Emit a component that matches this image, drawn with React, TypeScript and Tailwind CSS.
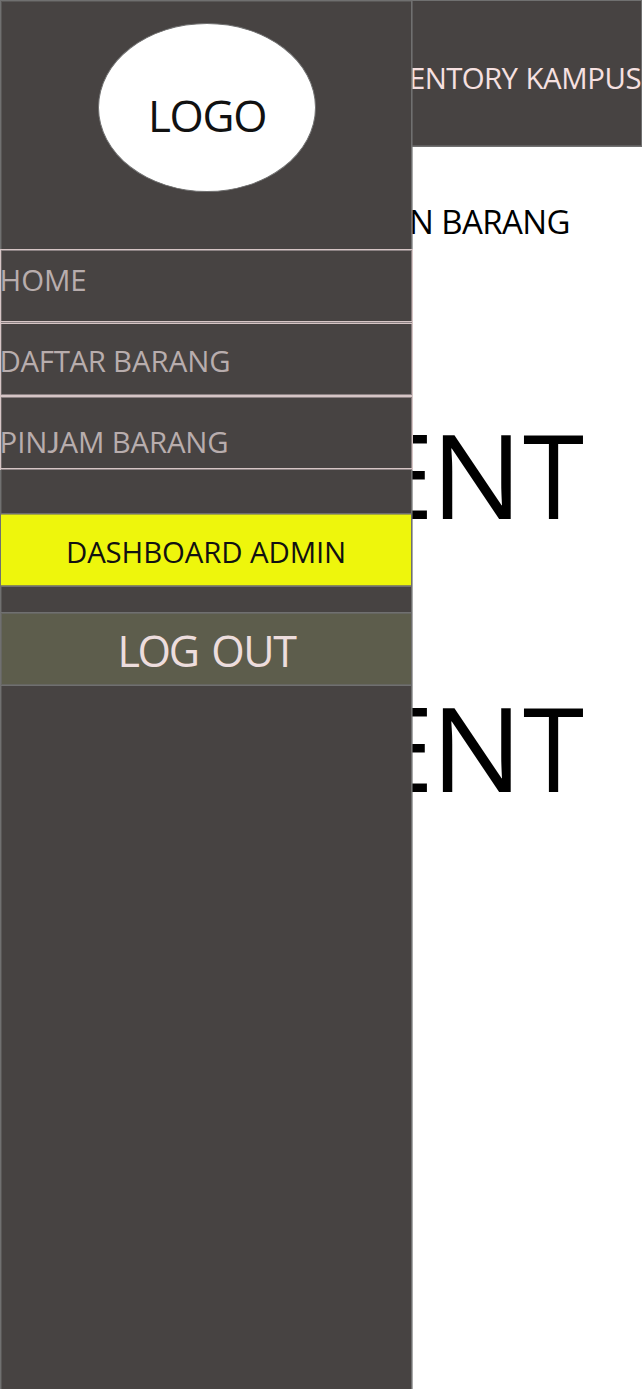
function Divider() {
  return (
    <div>
      <div className="h-px bg-[#d6c5c5]" />
      <div className="h-px bg-[#8c8283]" />
      <div className="h-px bg-[#d6c5c5]" />
    </div>
  );
}

function ThickDivider() {
  return (
    <div>
      <div className="h-px bg-[#8c8283]" />
      <div className="h-0.5 bg-[#d6c5c5]" />
      <div className="h-px bg-[#8c8283]" />
    </div>
  );
}

function Sidebar() {
  return (
    <aside className="absolute top-0 left-0 flex h-[1389px] w-[412px] flex-col bg-[#474342] shadow-[1px_0_0_#70707099]">
      <div className="flex h-[249px] justify-center border-x border-t border-[#707070] pt-[22px] pl-px shadow-[inset_1px_1px_0_#595756]">
        <div className="flex h-[169px] w-[218px] justify-center rounded-[50%] border border-[#707070] bg-white pt-[69px] pl-px">
          <span className="text-[44px] leading-[44px] tracking-[-1.3px] text-[#111111]">LOGO</span>
        </div>
      </div>

      <nav className="flex h-[221px] w-[413px] flex-col border-x border-[#d6c5c5] text-[29.4px] leading-[30px] text-[#b8adad] shadow-[inset_1px_0_0_#6f6868,inset_-1px_0_0_#8c8283]">
        <div className="h-px bg-[#d6c5c5]" />
        <div className="h-px bg-[#8c8283]" />
        <a className="-ml-[1.4px] block h-[70px] pt-[14px] tracking-[-0.1px]">HOME</a>
        <Divider />
        <a className="-ml-[1.4px] block h-[70px] pt-[22px] tracking-[-0.05px] whitespace-nowrap">
          <span className="tracking-[-0.35px]">DAFTAR</span> BARANG
        </a>
        <ThickDivider />
        <a className="-ml-[1.4px] block h-[70px] pt-[29px] tracking-[-0.15px] whitespace-nowrap">
          PIN<span className="font-['Lato']">J</span>AM BARANG
        </a>
        <div className="h-px bg-[#d6c5c5]" />
        <div className="h-px bg-[#8c8283]" />
      </nav>

      <div className="h-[43px] border-x border-[#707070] shadow-[inset_1px_0_0_#595756]" />
      <button className="flex h-[74px] shrink-0 justify-center border border-[#707070] bg-[#eef60c] pt-[23px] text-[29.4px] leading-[30px] tracking-[-0.12px] text-[#111111] shadow-[inset_0_1px_0_#a5a93a,inset_0_-1px_0_#8b8d51]">
        DASHBOARD ADMIN
      </button>
      <div className="h-[25px] border-x border-[#707070] shadow-[inset_1px_0_0_#595756]" />
      <button className="flex h-[74px] shrink-0 justify-center border border-[#707070] bg-[#5d5d4c] pt-[16px] pl-px text-[43px] leading-[44px] text-[#eddddd] shadow-[inset_1px_1px_0_#666661,inset_0_-1px_0_#666661]">
        <span className="tracking-[-2.3px]">LOG</span>
        <span className="ml-[13.5px] tracking-[-1.4px]">OUT</span>
      </button>
      <div className="grow border-x border-[#707070] shadow-[inset_1px_0_0_#595756]" />
    </aside>
  );
}

function Content({ className }: { className: string }) {
  return (
    <p className={`flex pr-[58px] text-[118px] leading-[118px] ${className}`}>
      <span className="-mr-[3px]">CONTE</span>
      <span className="origin-left scale-x-[1.03]">N</span>
      <span className="ml-[3px] w-[61px] origin-left scale-x-[0.94]">T</span>
    </p>
  );
}

export default function App() {
  return (
    <div className="relative h-[1389px] w-[642px] overflow-hidden bg-white font-['Open_Sans','Noto_Sans',sans-serif]">
      <main className="flex flex-col items-end whitespace-nowrap text-black">
        <header className="flex h-[147px] w-full justify-end border border-[#707070] bg-[#474342] pt-[62px] text-[29.4px] leading-[30px] text-[#f6e0e0] shadow-[inset_0_-1px_0_#5f5d5d]">
          <span className="tracking-[-0.6px]">INVENTORY</span>
          <span className="-mr-[0.3px] ml-[8px] tracking-[-0.4px]">KAMPUS</span>
        </header>
        <h1 className="mt-[58px] pr-[72px] text-[33px] leading-[34px] tracking-[-0.6px]">PEMINJAMAN BARANG</h1>
        <Content className="mt-[176px]" />
        <Content className="mt-[155px]" />
      </main>
      <Sidebar />
    </div>
  );
}
